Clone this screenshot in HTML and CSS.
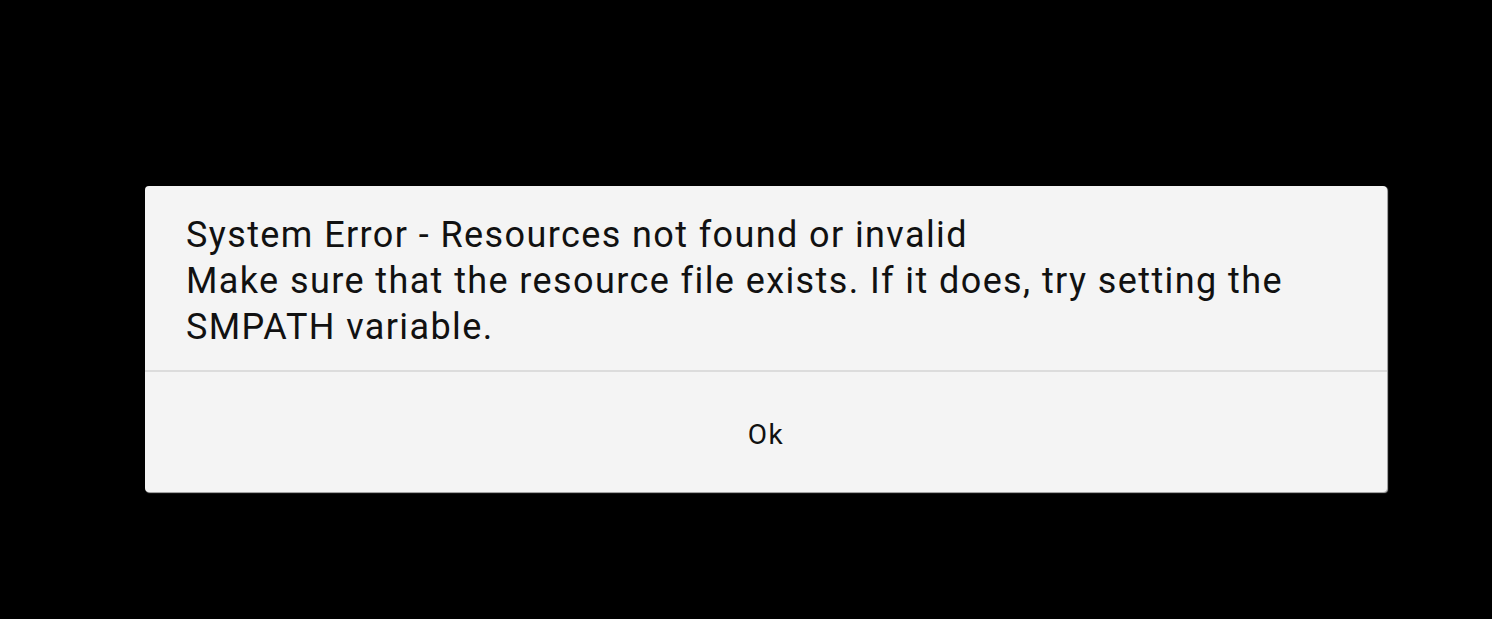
FILE: index.html
```html
<!DOCTYPE html>
<html lang="en">
<head>
  <meta charset="UTF-8">
  <title>System Error</title>
  <link rel="stylesheet" href="styles.css">
</head>
<body>
  <div class="dialog">
    <div class="mensagem">
      <p>System Error - Resources not found or invalid<br>
      Make sure that the resource file exists. If it does, try setting the SMPATH variable.</p>
    </div>
    <div class="acoes">
      <button>Ok</button>
    </div>
  </div>
</body>
</html>
```

FILE: styles.css
```css
html, body {
  height: 100%;
}

body {
  margin: 0;
  background-color: #000;
  font-family: Roboto, 'Noto Sans', sans-serif;
  overflow: hidden;
}

.dialog {
  margin: 186px 0 0 145px;
  width: 1242px;
  background: #f4f4f4;
  border-radius: 4px;
  box-shadow: 1px 1px 1px rgba(200,200,200,0.9);
}

.mensagem {
  padding: 26px 41px 20px 41px;
  border-bottom: 2px solid #dcdcdc;
}

.mensagem p {
  margin: 0;
  max-width: 1120px;
  font-size: 36px;
  line-height: 46px;
  letter-spacing: 1.4px;
  color: #111;
}

.acoes {
  height: 120px;
  display: flex;
  align-items: center;
  justify-content: center;
}

.acoes button {
  background: none;
  border: none;
  font-family: Roboto, sans-serif;
  font-size: 28px;
  letter-spacing: 1.5px;
  color: #111;
  padding: 0;
  margin-top: 4px;
}
```
